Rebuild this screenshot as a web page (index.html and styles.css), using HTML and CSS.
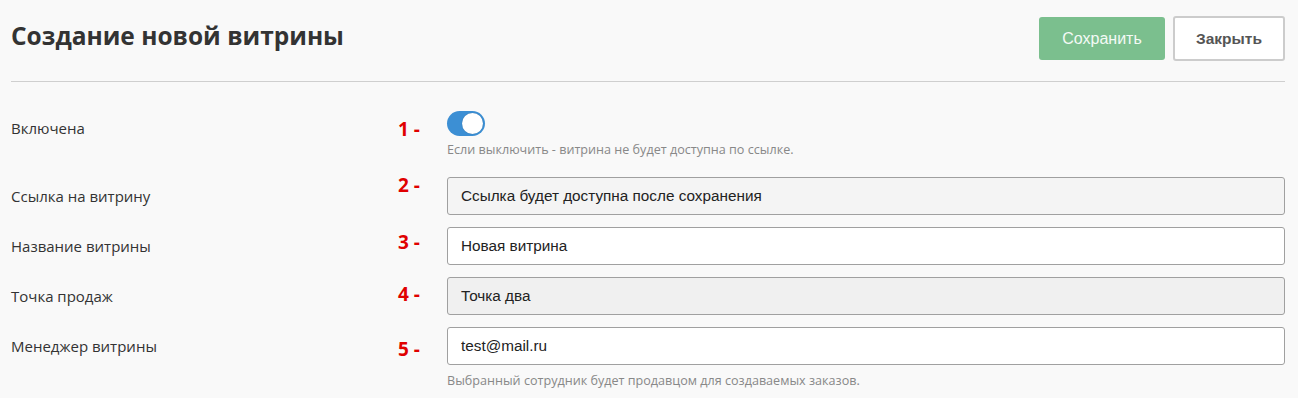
FILE: index.html
```html
<!DOCTYPE html>
<html lang="ru">
<head>
    <meta charset="UTF-8">
    <meta name="viewport" content="width=device-width, initial-scale=1.0">
    <title>Создание новой витрины</title>
    <link rel="stylesheet" href="styles.css">
</head>
<body>
    <div class="page">
        <div class="header">
            <h1>Создание новой витрины</h1>
            <div class="actions">
                <button class="btn btn-save">Сохранить</button>
                <button class="btn btn-close">Закрыть</button>
            </div>
        </div>

        <div class="row row-switch">
            <div class="label">Включена</div>
            <div class="num num-1">1 -</div>
            <div class="field">
                <label class="switch">
                    <input type="checkbox" checked>
                    <span class="slider"></span>
                </label>
                <div class="hint">Если выключить - витрина не будет доступна по ссылке.</div>
            </div>
        </div>

        <div class="row">
            <div class="label">Ссылка на витрину</div>
            <div class="num num-2">2 -</div>
            <div class="field">
                <input class="input input-readonly" type="text" value="Ссылка будет доступна после сохранения" readonly>
            </div>
        </div>

        <div class="row">
            <div class="label">Название витрины</div>
            <div class="num num-3">3 -</div>
            <div class="field">
                <input class="input" type="text" value="Новая витрина">
            </div>
        </div>

        <div class="row">
            <div class="label">Точка продаж</div>
            <div class="num num-4">4 -</div>
            <div class="field">
                <input class="input input-disabled" type="text" value="Точка два" readonly>
            </div>
        </div>

        <div class="row">
            <div class="label">Менеджер витрины</div>
            <div class="num num-5">5 -</div>
            <div class="field">
                <input class="input" type="text" value="test@mail.ru">
                <div class="hint hint-bottom">Выбранный сотрудник будет продавцом для создаваемых заказов.</div>
            </div>
        </div>
    </div>
</body>
</html>
```

FILE: styles.css
```css
body {
    margin: 0;
    background: #f9f9f9;
    font-family: "Open Sans", Arial, sans-serif;
    color: #333;
}
.page {
    padding: 0 13px 0 11px;
}
.header {
    display: flex;
    justify-content: space-between;
    align-items: center;
    padding-top: 16px;
    padding-bottom: 20px;
    border-bottom: 1px solid #cfcfcf;
}
h1 {
    margin: 0 0 6px 0;
    font-size: 24.5px;
    font-weight: 700;
    color: #333;
    line-height: 30px;
}
.actions {
    display: flex;
    align-items: center;
    gap: 8px;
}
.btn {
    font-family: Arial, "Liberation Sans", sans-serif;
    font-size: 16px;
    border-radius: 3px;
    cursor: pointer;
}
.btn-save {
    width: 126px;
    height: 43px;
    background: #7bbf8e;
    border: none;
    color: #f4faf6;
}
.btn-close {
    width: 112px;
    height: 45px;
    background: #fff;
    border: 2px solid #cccccc;
    color: #555;
    font-size: 15.5px;
    font-weight: 700;
}

.row {
    display: grid;
    grid-template-columns: 387px 49px 1fr;
    align-items: start;
    margin-bottom: 12px;
}
.label {
    margin-top: 9px;
    font-size: 15px;
    line-height: 20px;
    color: #333;
}
.num {
    font-size: 19px;
    font-weight: 700;
    line-height: 24px;
    color: #e00000;
}
.num-1 { margin-top: 6px; }
.num-2 { margin-top: -4px; }
.num-3 { margin-top: 3px; }
.num-4 { margin-top: 5px; }
.num-5 { margin-top: 10px; }

.row-switch {
    margin-top: 29px;
    margin-bottom: 19px;
}
.row-switch .label {
    margin-top: 7px;
}

.switch {
    display: block;
    position: relative;
    width: 38px;
    height: 25px;
}
.switch input {
    display: none;
}
.slider {
    position: absolute;
    inset: 0;
    background: #3c8fd4;
    border-radius: 13px;
}
.slider::after {
    content: "";
    position: absolute;
    top: 2px;
    right: 2px;
    width: 21px;
    height: 21px;
    border-radius: 50%;
    background: #fff;
    box-shadow: 0 0 1px rgba(0, 0, 0, 0.3);
}
.hint {
    margin-top: 5px;
    font-size: 12.6px;
    line-height: 17px;
    color: #888;
}
.hint-bottom {
    margin-top: 7px;
}

.input {
    display: block;
    box-sizing: border-box;
    width: 100%;
    height: 38px;
    padding: 0 13px;
    border: 1px solid #a0a0a0;
    border-radius: 3px;
    background: #fff;
    font-family: Arial, "Liberation Sans", sans-serif;
    font-size: 15.3px;
    color: #222;
    outline: none;
}
.input-readonly {
    background: #f4f4f4;
}
.input-disabled {
    background: #f0f0f0;
}
```
